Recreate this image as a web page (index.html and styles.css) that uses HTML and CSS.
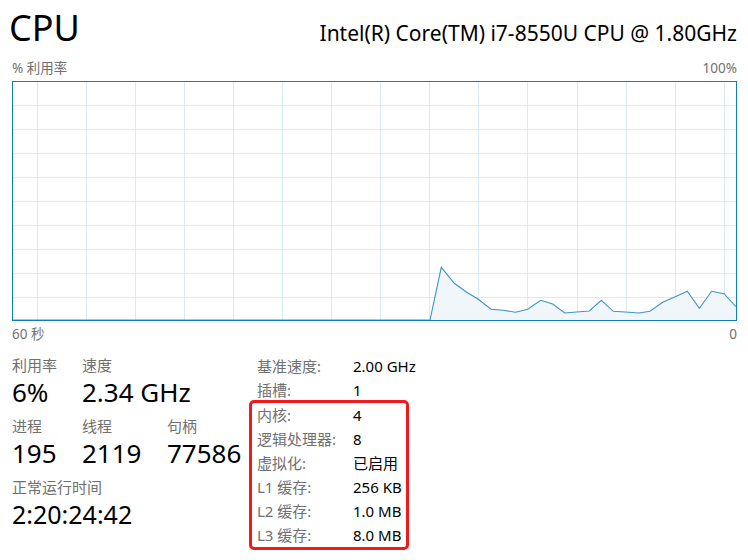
FILE: index.html
```html
<!DOCTYPE html>
<html lang="zh-CN">
<head>
    <meta charset="UTF-8">
    <title>CPU</title>
    <link rel="stylesheet" href="styles.css">
</head>
<body>
    <div class="page">
        <div class="header">
            <div class="title">CPU</div>
            <div class="model">Intel(R) Core(TM) i7-8550U CPU @ 1.80GHz</div>
        </div>

        <div class="axis axis-top">
            <span>% 利用率</span>
            <span>100%</span>
        </div>
        <div class="chart">
            <svg width="723" height="238" viewBox="0 0 723 238">
                <g class="grid">
                    <line x1="24.5" y1="0" x2="24.5" y2="238"/>
                    <line x1="73.5" y1="0" x2="73.5" y2="238"/>
                    <line x1="122.5" y1="0" x2="122.5" y2="238"/>
                    <line x1="171.5" y1="0" x2="171.5" y2="238"/>
                    <line x1="220.5" y1="0" x2="220.5" y2="238"/>
                    <line x1="269.5" y1="0" x2="269.5" y2="238"/>
                    <line x1="318.5" y1="0" x2="318.5" y2="238"/>
                    <line x1="367.5" y1="0" x2="367.5" y2="238"/>
                    <line x1="416.5" y1="0" x2="416.5" y2="238"/>
                    <line x1="465.5" y1="0" x2="465.5" y2="238"/>
                    <line x1="514.5" y1="0" x2="514.5" y2="238"/>
                    <line x1="564.5" y1="0" x2="564.5" y2="238"/>
                    <line x1="613.5" y1="0" x2="613.5" y2="238"/>
                    <line x1="662.5" y1="0" x2="662.5" y2="238"/>
                    <line x1="711.5" y1="0" x2="711.5" y2="238"/>
                    <line x1="0" y1="23.5" x2="723" y2="23.5"/>
                    <line x1="0" y1="47.5" x2="723" y2="47.5"/>
                    <line x1="0" y1="71.5" x2="723" y2="71.5"/>
                    <line x1="0" y1="95.5" x2="723" y2="95.5"/>
                    <line x1="0" y1="119.5" x2="723" y2="119.5"/>
                    <line x1="0" y1="143.5" x2="723" y2="143.5"/>
                    <line x1="0" y1="167.5" x2="723" y2="167.5"/>
                    <line x1="0" y1="191.5" x2="723" y2="191.5"/>
                    <line x1="0" y1="215.5" x2="723" y2="215.5"/>
                </g>
                <polygon class="area" points="0,238 417,238 428.3,185.3 441.3,201.3 453.7,210.3 465.3,217.3 478,227.3 490.3,228.3 502.7,230.3 514.7,227.3 527.7,218.3 539.7,222 551.7,231 563.7,230 576.3,229 588.3,218.3 600.3,229.3 612.3,230 625.7,231 637,229.3 649.7,220.3 662.3,214.7 674.3,209.3 686.3,226.3 698.7,209.3 711,211.7 723,224.7 723,238"/>
                <polyline class="trace" points="0,238 417,238 428.3,185.3 441.3,201.3 453.7,210.3 465.3,217.3 478,227.3 490.3,228.3 502.7,230.3 514.7,227.3 527.7,218.3 539.7,222 551.7,231 563.7,230 576.3,229 588.3,218.3 600.3,229.3 612.3,230 625.7,231 637,229.3 649.7,220.3 662.3,214.7 674.3,209.3 686.3,226.3 698.7,209.3 711,211.7 723,224.7"/>
            </svg>
        </div>
        <div class="axis axis-bottom">
            <span>60 秒</span>
            <span>0</span>
        </div>

        <div class="stats">
            <div class="dynamic">
                <div class="stat-row">
                    <div class="stat stat-util">
                        <div class="label">利用率</div>
                        <div class="value">6%</div>
                    </div>
                    <div class="stat">
                        <div class="label">速度</div>
                        <div class="value">2.34 GHz</div>
                    </div>
                </div>
                <div class="stat-row">
                    <div class="stat stat-util">
                        <div class="label">进程</div>
                        <div class="value">195</div>
                    </div>
                    <div class="stat stat-threads">
                        <div class="label">线程</div>
                        <div class="value">2119</div>
                    </div>
                    <div class="stat">
                        <div class="label">句柄</div>
                        <div class="value">77586</div>
                    </div>
                </div>
                <div class="stat-row">
                    <div class="stat">
                        <div class="label">正常运行时间</div>
                        <div class="value value-uptime">2:20:24:42</div>
                    </div>
                </div>
            </div>

            <div class="specs">
                <div class="spec"><span class="spec-name">基准速度:</span><span>2.00 GHz</span></div>
                <div class="spec"><span class="spec-name">插槽:</span><span>1</span></div>
                <div class="highlight">
                    <div class="spec"><span class="spec-name">内核:</span><span>4</span></div>
                    <div class="spec"><span class="spec-name">逻辑处理器:</span><span>8</span></div>
                    <div class="spec"><span class="spec-name">虚拟化:</span><span>已启用</span></div>
                    <div class="spec"><span class="spec-name">L1 缓存:</span><span>256 KB</span></div>
                    <div class="spec"><span class="spec-name">L2 缓存:</span><span>1.0 MB</span></div>
                    <div class="spec"><span class="spec-name">L3 缓存:</span><span>8.0 MB</span></div>
                </div>
            </div>
        </div>
    </div>
</body>
</html>
```

FILE: styles.css
```css
body {
    margin: 0;
    background: #ffffff;
    font-family: "Noto Sans", "Noto Sans CJK SC", sans-serif;
    color: #000000;
}
.page {
    width: 748px;
    height: 560px;
    overflow: hidden;
}
.header {
    display: flex;
    justify-content: space-between;
    align-items: baseline;
    padding: 3px 11px 0 9px;
    height: 55px;
    box-sizing: border-box;
}
.title {
    font-size: 36px;
    line-height: 50px;
}
.model {
    font-size: 21px;
    line-height: 26px;
}
.axis {
    display: flex;
    justify-content: space-between;
    font-size: 13.5px;
    color: #707070;
    padding: 0 11px 0 12px;
    height: 26px;
    line-height: 26px;
}
.chart {
    margin-left: 12px;
    width: 725px;
    height: 240px;
    border: 1px solid #117dbb;
    box-sizing: border-box;
}
.chart svg {
    display: block;
}
.grid line {
    stroke: #d9eaf4;
    stroke-width: 1;
}
.area {
    fill: #f1f6fa;
}
.trace {
    fill: none;
    stroke: #3c94cc;
    stroke-width: 1.1;
}
.stats {
    display: flex;
    padding: 8px 0 0 12px;
}
.dynamic {
    width: 245px;
}
.stat-row {
    display: flex;
    margin-bottom: 7px;
}
.stat {
    display: flex;
    flex-direction: column;
}
.stat-util {
    width: 70px;
}
.stat-threads {
    width: 85px;
}
.label {
    font-size: 15px;
    line-height: 20px;
    color: #707070;
}
.value {
    font-size: 26px;
    line-height: 34px;
}
.value-uptime {
    font-size: 25px;
}
.specs {
    margin-top: -1px;
    font-size: 15px;
}
.spec {
    display: flex;
    height: 24px;
    line-height: 24px;
}
.spec-name {
    width: 96px;
    color: #707070;
}
.highlight {
    margin: -2px 0 0 -8px;
    padding-left: 5px;
    width: 149px;
    border: 3px solid #f01a1e;
    border-radius: 5px;
}
```
